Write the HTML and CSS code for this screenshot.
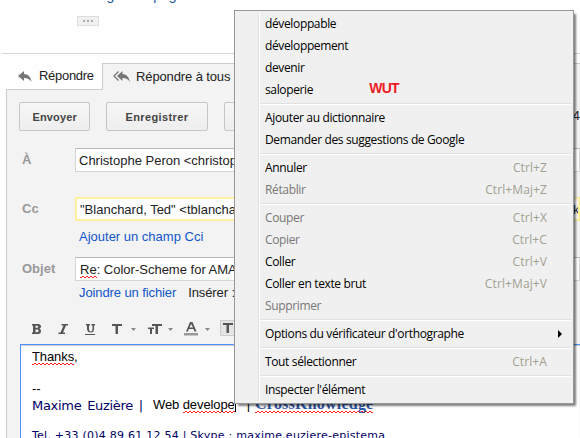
FILE: index.html
```html
<!DOCTYPE html>
<html lang="fr">
<head>
<meta charset="utf-8">
<title>Répondre</title>
<link rel="stylesheet" href="styles.css">
</head>
<body>
<main class="page">
  <section class="message">
    <div class="excerpt">image une page</div>
    <button class="more"><i></i><i></i><i></i></button>
  </section>
  <nav class="tabs">
    <div class="tab active">
      <svg width="14" height="11" viewBox="0 0 14 11"><path d="M0 5 6 0v3c4 0 7 3 7.500 8C11.500 8 9.500 7 6 7v3Z"/></svg>
      <span class="t-reply">Répondre</span>
    </div>
    <div class="tab all">
      <svg width="17" height="11" viewBox="0 0 17 11"><path d="M4 5 9.500 0v3c4 0 6.500 3 7.500 8-2-3-4-4-7.500-4v3Z"/><path class="chevron" d="M5.500.5 1 5l4.500 4.500"/></svg>
      <span class="t-all">Répondre à tous</span>
    </div>
  </nav>
  <section class="compose">
    <div class="actions">
      <button class="btn send">Envoyer</button>
      <button class="btn save">Enregistrer</button>
      <button class="btn discard"></button>
      <span class="time">4</span>
    </div>
    <div class="row to"><label>À</label><div class="field"><span>Christophe Peron &lt;christop</span></div></div>
    <div class="row cc"><label>Cc</label><div class="field"><span>"Blanchard, Ted" &lt;tblancha</span><span class="tail">kr</span></div></div>
    <div class="links bcc"><a>Ajouter un champ Cci</a></div>
    <div class="row subject"><label>Objet</label><div class="field"><span><u class="misspelt">Re</u>: Color-Scheme for AMA</span></div></div>
    <div class="links attach"><a>Joindre un fichier</a><span>Insérer :</span></div>
    <div class="toolbar">
      <svg width="240" height="22" viewBox="0 0 240 22">
        <g class="ink">
          <path fill-rule="evenodd" d="M0 6h6q3 0 3 2.500Q9 10 7.500 10.500 9 11 9 13q0 3-3 3H0v-1.500h1v-7H0ZM3.500 7.700v2H5q1.300 0 1.300-1T5 7.700ZM3.500 11.500v2.700h1.800q1.300 0 1.300-1.400t-1.300-1.300Z"/>
          <path d="M29.500 6H36v1.500h-2L31 14.500h2V16h-6.500v-1.500h2l3-7h-2Z"/>
          <path d="M54 6h4v1.500h-1V11q0 2.500 1.800 2.500T60.500 11V7.500h-1V6H63v1.500h-1V11q0 3.500-3.300 3.500T55 11V7.500h-1ZM53 16h10v1H53Z"/>
          <path d="M80 6h10v2h-4v8h-2.500V8H80Z"/>
          <path d="M120 6h10v2h-4v8h-2.500V8H120ZM116 9.500h6v1.500h-2v5h-2v-5h-2Z"/>
          <path fill-rule="evenodd" d="M158 4h2.500l4 9.500h-2l-1-2.500h-4.600l-1 2.500H154ZM159.200 6l-1.700 3.500h3.500Z"/>
        </g>
        <path class="bar" d="M152 15h14v2.500h-14Z"/>
        <path class="arrow" d="M99 10h5l-2.500 3ZM136 10h5l-2.500 3ZM173 10h5l-2.500 3Z"/>
        <path class="pressed" d="M188.500 2.500H220v15h-31.500Z"/>
        <path class="ink" d="M191 5h10v2h-4v8h-2.500V7H191Z"/>
      </svg>
    </div>
    <div class="editor">
      <p class="thanks"><u class="misspelt">Thanks</u>,</p>
      <p class="dashes">--</p>
      <p class="signature"><span class="name">Maxime Euzière |</span><span class="job">Web <u class="misspelt">develope</u></span><i class="caret"></i><span class="pipe">|</span><a class="company misspelt">CrossKnowledge</a></p>
      <p class="phone">Tel. +33 (0)4 89 61 12 54 | Skype : maxime.euziere-epistema</p>
    </div>
  </section>
</main>
<aside class="menu">
  <div class="group">
    <div class="item"><span>développable</span></div>
    <div class="item"><span>développement</span></div>
    <div class="item"><span>devenir</span></div>
    <div class="item"><span>saloperie</span><strong>WUT</strong></div>
  </div>
  <div class="group">
    <div class="item"><span>Ajouter au dictionnaire</span></div>
    <div class="item"><span>Demander des suggestions de Google</span></div>
  </div>
  <div class="group">
    <div class="item"><span>Annuler</span><kbd>Ctrl+Z</kbd></div>
    <div class="item off"><span>Rétablir</span><kbd>Ctrl+Maj+Z</kbd></div>
  </div>
  <div class="group">
    <div class="item off"><span>Couper</span><kbd>Ctrl+X</kbd></div>
    <div class="item off"><span>Copier</span><kbd>Ctrl+C</kbd></div>
    <div class="item"><span>Coller</span><kbd>Ctrl+V</kbd></div>
    <div class="item"><span>Coller en texte brut</span><kbd>Ctrl+Maj+V</kbd></div>
    <div class="item off"><span>Supprimer</span></div>
  </div>
  <div class="group">
    <div class="item"><span>Options du vérificateur d'orthographe</span><svg class="submenu" width="4" height="8"><path d="M0 0 4 4 0 8Z"/></svg></div>
  </div>
  <div class="group">
    <div class="item"><span>Tout sélectionner</span><kbd>Ctrl+A</kbd></div>
  </div>
  <div class="group">
    <div class="item"><span>Inspecter l'élément</span></div>
  </div>
</aside>
</body>
</html>
```
FILE: styles.css
```css
* { box-sizing: border-box; }
body { margin: 0; width: 580px; height: 438px; overflow: hidden; background: #fff; font: 13px/16px "Liberation Sans", Arial, sans-serif; color: #222; }
.page { height: 438px; overflow: hidden; background: #fefefe; }
.message { height: 54px; margin-left: 2px; border-bottom: 1px solid #d5d5d5; }
.excerpt { height: 16px; padding-left: 82px; color: #15559a; line-height: 16px; transform: translateY(-13px); font-size: 14px; }
.more { display: flex; align-items: center; justify-content: center; gap: 2px; width: 22px; height: 10px; margin-left: 75px; padding: 0; border: 1px solid #ddd; background: #f1f1f1; }
.more i { width: 2px; height: 2px; background: #aaa; }
.tabs { display: flex; height: 36px; padding-top: 9px; }
.tab { display: flex; height: 27px; white-space: nowrap; }
.tab svg { fill: #777; flex: none; }
.tab.active { width: 96px; margin-left: 6px; padding: 5px 0 0 12px; border-bottom: 1px solid #ccc; }
.tab.active svg { margin: 3px 7px 0 0; }
.tab.all { flex: 1; padding: 5px 0 0 10px; border: solid #ccc; border-width: 1px 0 0 1px; background: #f3f3f3; }
.tab.all svg { margin: 2px 6px 0 0; }
.chevron { fill: none; stroke: #777; stroke-width: 1.3; }
.t-reply { letter-spacing: -.3px; }
.t-all { letter-spacing: -.12px; }
.compose { height: 348px; margin-left: 6px; border-left: 1px solid #ccc; background: #f3f3f3; }
.actions { display: flex; height: 58px; padding: 12px 0 0 12px; gap: 16px; }
.btn { height: 29px; padding: 0; border: 1px solid #c6c6c6; border-radius: 2px; background: linear-gradient(#f6f6f6, #eee); color: #444; font: bold 11px "Liberation Sans", Arial, sans-serif; }
.send { width: 72px; letter-spacing: .15px; }
.save { width: 102px; letter-spacing: .38px; }
.discard { width: 90px; }
.time { margin: 6px 0 0 244px; font-size: 13px; }
.row { display: flex; height: 24px; }
.row label { width: 68px; padding-left: 15px; line-height: 23px; color: #999; font-weight: bold; }
.field { display: flex; flex: 1; overflow: hidden; padding-left: 3px; border: 1px solid #d5d5d5; border-top-color: #b8b8b8; background: #fff; line-height: 23px; white-space: nowrap; }
.cc { margin-top: 25px; }
.cc .field { border: 2px solid #ffefa0; line-height: 22px; position: relative; }
.tail { position: absolute; left: 496px; }
.links { display: flex; gap: 12px; padding-left: 72px; white-space: nowrap; }
.links a { color: #15c; }
.bcc { height: 36px; padding-top: 8px; }
.subject .field { padding-left: 4px; }
.attach { height: 37px; padding-top: 4px; letter-spacing: -.1px; }
.misspelt { padding-bottom: 1px; text-decoration: none; background: linear-gradient(45deg, transparent 36%, #f33 36%, #f33 64%, transparent 64%) 0 100% / 2px 2px repeat-x, linear-gradient(#f99, #f99) 0 100% / 0 0 no-repeat; background: conic-gradient(#f22 25%, transparent 0 50%, #f22 0 75%, transparent 0) 0 100% / 4px 2px repeat-x; }
.toolbar { height: 26px; padding-left: 25px; }
.toolbar svg { display: block; }
.ink { fill: #555; }
.bar { fill: #999; }
.arrow { fill: #888; }
.pressed { fill: #e5e5e5; stroke: #ccc; }
.editor { height: 100px; margin-left: 13px; padding: 4px 0 0 11px; border: solid #4d90fe; border-width: 1px 0 0 1px; background: #fff; box-shadow: inset 0 1px 1px #ccc; white-space: nowrap; }
.editor p { margin: 0; height: 16px; color: #000; }
.editor .thanks { letter-spacing: -.1px; }
.editor .dashes { margin-top: 16px; }
.editor .signature { display: flex; height: 17px; }
.editor .name { width: 112px; font: 13px/17px "DejaVu Sans", sans-serif; letter-spacing: -.3px; word-spacing: 2px; color: #000066; }
.job { margin-left: 9px; letter-spacing: -.1px; }
.caret { width: 1px; height: 14px; margin-top: 1px; background: #000; }
.pipe { margin-left: 11px; }
.company { height: 16px; margin-left: 5px; color: #2f55a4; font: bold 16px/14px "Liberation Serif", serif; letter-spacing: .22px; }
.editor .phone { margin-top: 14px; font: 11px/16px "DejaVu Sans", sans-serif; letter-spacing: .24px; color: #000066; }
.menu { position: absolute; left: 234px; top: 10px; width: 340px; height: 394px; padding: 2px 2px 0; border: 1px solid #979797; background: linear-gradient(90deg, #f0f0f0 22px, #e2e2e2 22px, #e2e2e2 23px, #fff 23px, #fff 24px, #f0f0f0 24px) 1px 2px / 336px 388px no-repeat #f0f0f0; box-shadow: 3px 3px 2px -1px rgba(0,0,0,.5); color: #000; font: 12px/22px "Open Sans", "Noto Sans", sans-serif; white-space: nowrap; }
.group + .group { margin: 2px 0 0 23px; padding-top: 3px; border-top: 1px solid #e0e0e0; box-shadow: inset 0 1px #fff; }
.group .item { padding-left: 5px; }
.group:first-child .item { padding-left: 28px; }
.item { display: flex; height: 22px; }
.item span { letter-spacing: -.36px; }
.item.off { color: #777; }
.item kbd { margin: 0 24px 0 auto; color: #a0a090; font: inherit; letter-spacing: .1px; }
.item strong { margin-left: 56px; color: #ed1c24; font: bold 14px/19px "Liberation Sans", sans-serif; letter-spacing: -.7px; }
.submenu { margin: 7px 9px 0 auto; }
```
